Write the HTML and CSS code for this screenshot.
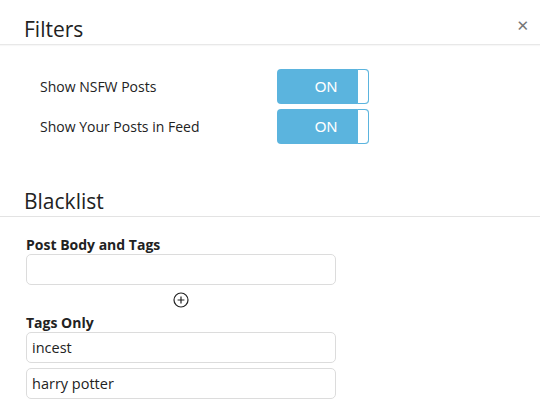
FILE: index.html
```html
<!DOCTYPE html>
<html>
<head>
<meta charset="utf-8">
<link rel="stylesheet" href="styles.css">
</head>
<body>
<div class="modal">
  <div class="header">
    <h2 class="title">Filters</h2>
    <span class="close">&#x2715;</span>
  </div>
  <div class="settings">
    <div class="row">
      <span class="label">Show NSFW Posts</span>
      <div class="toggle"><span class="on">ON</span><span class="knob"></span></div>
    </div>
    <div class="row">
      <span class="label">Show Your Posts in Feed</span>
      <div class="toggle"><span class="on">ON</span><span class="knob"></span></div>
    </div>
  </div>
  <div class="section-head">
    <h2 class="title">Blacklist</h2>
  </div>
  <div class="blacklist">
    <div class="field-label">Post Body and Tags</div>
    <div class="input"></div>
    <div class="add">
      <svg width="16" height="16" viewBox="0 0 16 16"><circle cx="8" cy="8" r="7" fill="none" stroke="#222" stroke-width="1.2"/><path d="M8 4.6v6.8M4.6 8h6.8" stroke="#222" stroke-width="1.2"/></svg>
    </div>
    <div class="field-label">Tags Only</div>
    <div class="input">incest</div>
    <div class="input">harry potter</div>
  </div>
</div>
</body>
</html>
```
FILE: styles.css
```css
html, body {
  margin: 0;
  padding: 0;
  background: #fff;
}
body {
  font-family: "Open Sans", "Lato", sans-serif;
  color: #222;
}
.modal {
  width: 540px;
  height: 403px;
  overflow: hidden;
}
.header {
  display: flex;
  justify-content: space-between;
  align-items: flex-start;
  height: 45px;
  box-sizing: border-box;
  padding: 15px 11px 0 24px;
  border-bottom: 1px solid #e8e8e8;
  box-shadow: 0 1px 1px rgba(0,0,0,0.03);
}
.title {
  margin: 0;
  font-size: 21px;
  font-weight: 400;
  line-height: 28px;
  color: #222;
}
.close {
  font-family: "DejaVu Sans", sans-serif;
  font-size: 15px;
  color: #777;
  line-height: 18px;
  margin-top: 2px;
}
.settings {
  display: flex;
  flex-direction: column;
  gap: 5px;
  padding: 24px 0 0 40px;
}
.row {
  display: grid;
  grid-template-columns: 237px 92px;
  align-items: center;
}
.label {
  font-size: 14px;
  color: #222;
}
.toggle {
  display: flex;
  height: 35px;
  border-radius: 4px;
  background: #5bb4de;
  overflow: hidden;
}
.on {
  flex: 1;
  display: flex;
  align-items: center;
  justify-content: center;
  padding-left: 18px;
  font-family: "Liberation Sans", Arial, sans-serif;
  font-size: 15px;
  color: #fff;
}
.knob {
  width: 10px;
  background: #fff;
  border: 1px solid #5bb4de;
  border-radius: 0 4px 4px 0;
}
.section-head {
  padding: 43px 24px 0 24px;
  height: 73px;
  box-sizing: border-box;
  border-bottom: 1px solid #e3e3e3;
}
.blacklist {
  display: flex;
  flex-direction: column;
  padding: 18px 0 0 26px;
  width: 310px;
}
.field-label {
  font-size: 14px;
  font-weight: 700;
  line-height: 19px;
}
.input {
  box-sizing: border-box;
  height: 31px;
  border: 1px solid #dcdcdc;
  border-radius: 5px;
  padding: 0 5px;
  font-size: 14.5px;
  line-height: 29px;
  color: #222;
  margin-bottom: 5px;
}
.add {
  display: flex;
  justify-content: center;
  margin: 2px 0 5px 0;
  height: 16px;
}
```
